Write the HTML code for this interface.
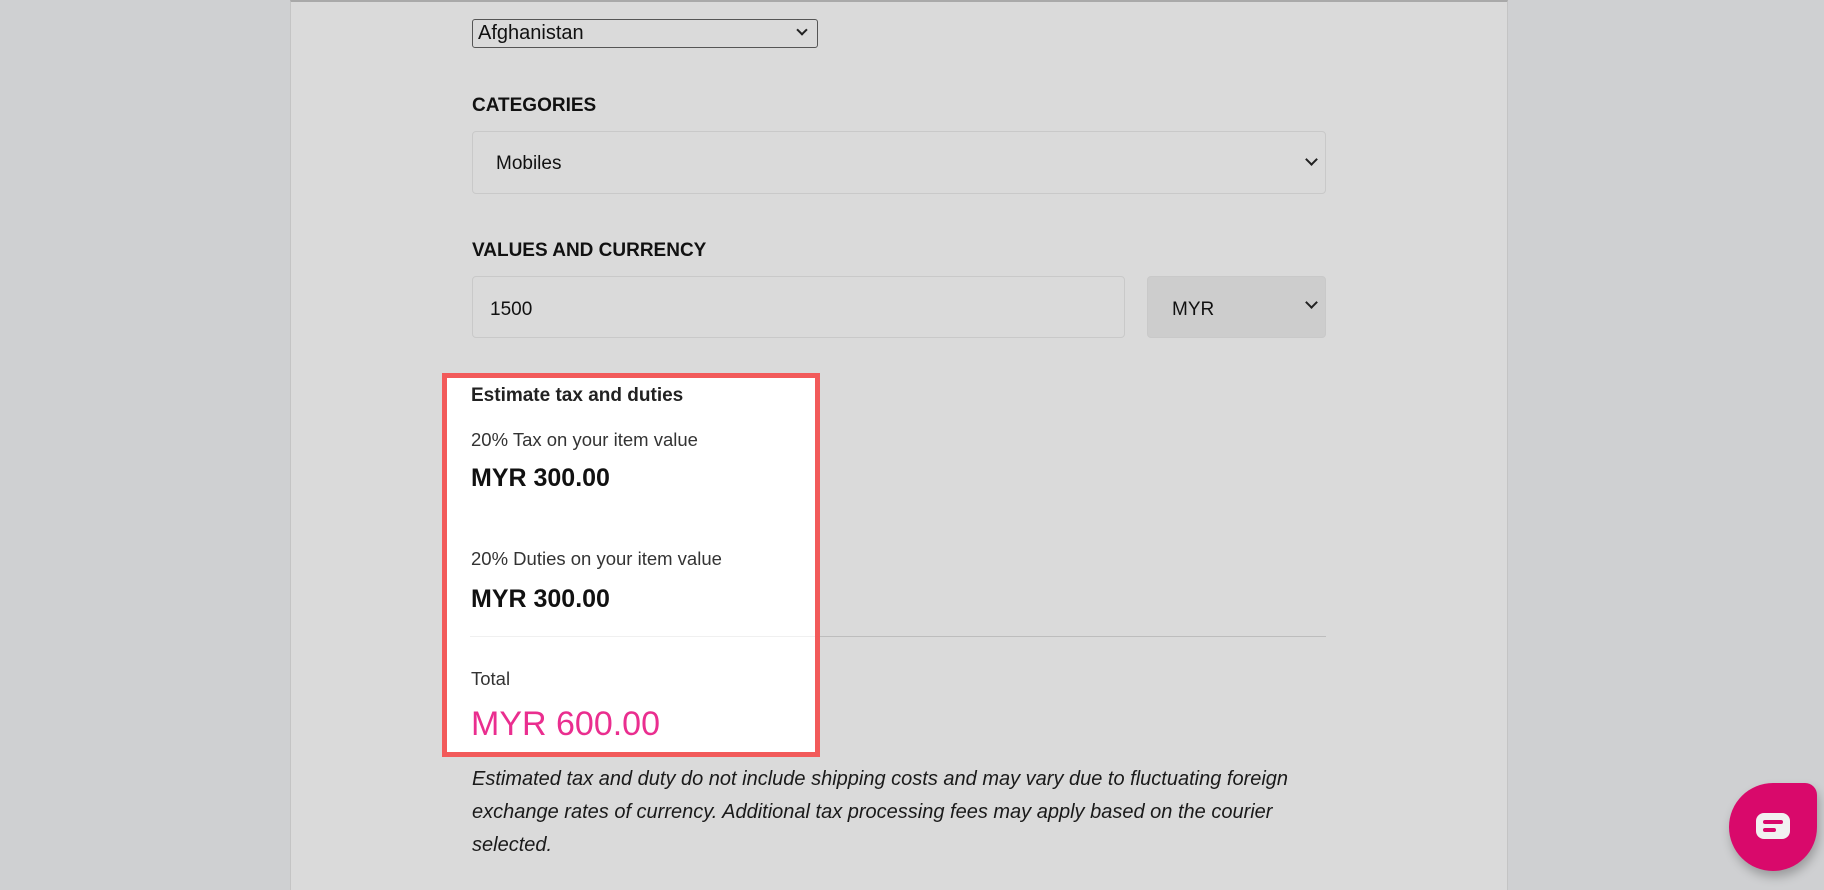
<!DOCTYPE html>
<html><head><meta charset="utf-8"><style>
*{box-sizing:border-box;margin:0;padding:0}
body{width:1824px;height:890px;overflow:hidden;background:#cfd0d2;font-family:"Liberation Sans",sans-serif;color:#111;position:relative}
.panel{position:absolute;left:290px;top:0;width:1218px;height:890px;background:#dadada;border-left:1px solid #c4c4c4;border-right:1px solid #c4c4c4;border-top:2px solid #a9a9a9}
.abs{position:absolute}
.sel{position:absolute;border:1px solid #c9c9c9;border-radius:4px;background:#dadada}
.chev{position:absolute;width:9px;height:9px;border-right:2px solid #222;border-bottom:2px solid #222;transform:rotate(45deg)}
.lbl{position:absolute;left:472px;font-weight:bold;font-size:19px}
</style></head><body>
<div class="panel"></div>
<div class="abs" style="left:472px;top:19px;width:346px;height:29px;border:1px solid #555;border-radius:3px;background:#dadada"></div>
<div class="abs" style="left:478px;top:22px;font-size:20px">Afghanistan</div>
<div class="chev" style="left:798px;top:26px;width:8px;height:8px"></div>
<div class="lbl" style="top:95px">CATEGORIES</div>
<div class="sel" style="left:472px;top:131px;width:854px;height:63px"></div>
<div class="abs" style="left:496px;top:153px;font-size:19px">Mobiles</div>
<div class="chev" style="left:1307px;top:155px"></div>
<div class="lbl" style="top:240px">VALUES AND CURRENCY</div>
<div class="sel" style="left:472px;top:276px;width:653px;height:62px"></div>
<div class="abs" style="left:490px;top:299px;font-size:19px">1500</div>
<div class="sel" style="left:1147px;top:276px;width:179px;height:62px;background:#cdcdcd"></div>
<div class="abs" style="left:1172px;top:299px;font-size:19px">MYR</div>
<div class="chev" style="left:1307px;top:298px"></div>
<div class="abs" style="left:472px;top:636px;width:854px;height:1px;background:#bdbdbd"></div>
<div class="abs" style="left:442px;top:373px;width:378px;height:384px;background:#fff;border:5px solid #f25a5a"></div>
<div class="abs" style="left:471px;top:385px;font-size:19px;font-weight:bold;color:#222">Estimate tax and duties</div>
<div class="abs" style="left:471px;top:429px;font-size:18.5px;color:#333">20% Tax on your item value</div>
<div class="abs" style="left:471px;top:464px;font-size:25px;font-weight:bold">MYR 300.00</div>
<div class="abs" style="left:471px;top:548px;font-size:18.5px;color:#333">20% Duties on your item value</div>
<div class="abs" style="left:471px;top:585px;font-size:25px;font-weight:bold">MYR 300.00</div>
<div class="abs" style="left:470px;top:636px;width:345px;height:1px;background:#f0f0f0"></div>
<div class="abs" style="left:471px;top:668px;font-size:18.5px;color:#333">Total</div>
<div class="abs" style="left:471px;top:705px;font-size:34px;color:#ea2e8f">MYR 600.00</div>
<div class="abs" style="left:472px;top:763px;width:860px;font-size:20px;font-style:italic;line-height:33px;color:#1a1a1a">Estimated tax and duty do not include shipping costs and may vary due to fluctuating foreign exchange rates of currency. Additional tax processing fees may apply based on the courier selected.</div>
<div class="abs" style="left:1729px;top:783px;width:88px;height:88px;background:#d9096b;border-radius:50% 12px 50% 50%;box-shadow:2px 6px 10px rgba(0,0,0,.25)"></div>
<div class="abs" style="left:1756px;top:813px;width:34px;height:26px;background:#f1f1f1;border-radius:8px"></div>
<div class="abs" style="left:1763px;top:820px;width:20px;height:4px;background:#d9096b;border-radius:2px"></div>
<div class="abs" style="left:1763px;top:828px;width:13px;height:4px;background:#d9096b;border-radius:2px"></div>
</body></html>
